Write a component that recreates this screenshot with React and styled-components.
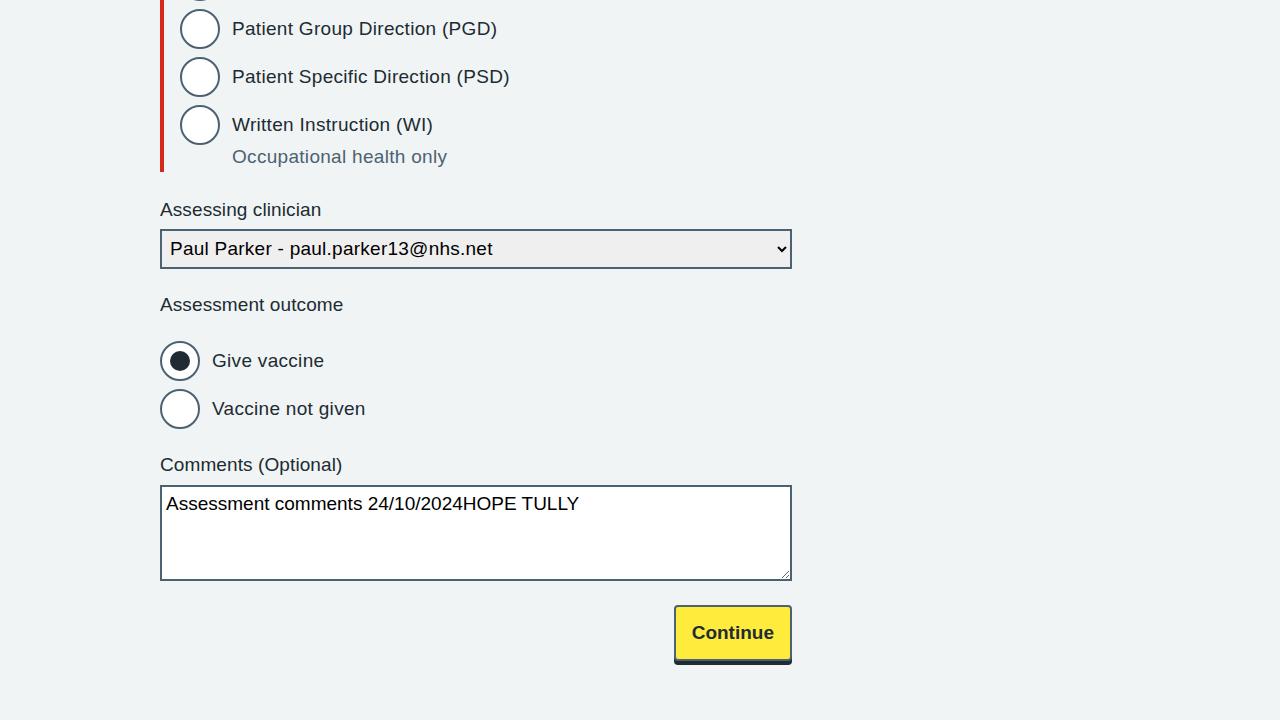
import styled, { createGlobalStyle, css } from 'styled-components'

const GlobalStyle = createGlobalStyle`
  html, body {
    margin: 0;
    padding: 0;
    background: #f0f4f5;
  }
  body {
    font-family: 'Liberation Sans', Arial, sans-serif;
    color: #212b32;
  }
`

const Page = styled.main`
  width: 632px;
  margin-left: 160px;
  padding-bottom: 40px;
`

const ErrorGroup = styled.div`
  margin-top: -39px;
  border-left: 4px solid #d5281b;
  padding-left: 16px;
  padding-bottom: 1px;
`

const RadioItem = styled.label`
  display: flex;
  align-items: center;
  height: 40px;
  margin-bottom: ${(p) => (p.$last ? '0' : '8px')};
  cursor: pointer;
`

const Circle = styled.span`
  position: relative;
  flex: 0 0 auto;
  box-sizing: border-box;
  width: 40px;
  height: 40px;
  border: 2px solid #4c6272;
  border-radius: 50%;
  background: #ffffff;

  ${(p) =>
    p.$checked &&
    css`
      &::after {
        content: '';
        position: absolute;
        top: 8px;
        left: 8px;
        width: 20px;
        height: 20px;
        border-radius: 50%;
        background: #212b32;
      }
    `}
`

const RadioText = styled.span`
  padding-left: 12px;
  font-size: 19px;
  line-height: 28px;
  letter-spacing: 0.3px;
  color: #212b32;
`

const Hint = styled.div`
  margin-top: -2px;
  padding-left: 52px;
  font-size: 19px;
  line-height: 28px;
  letter-spacing: 0.3px;
  color: #4c6272;
`

const Label = styled.div`
  margin-top: ${(p) => p.$top || '0'};
  margin-bottom: ${(p) => p.$bottom || '5px'};
  font-size: 19px;
  line-height: 28px;
  letter-spacing: 0.1px;
  color: #212b32;
`

const Select = styled.select`
  display: block;
  box-sizing: border-box;
  width: 100%;
  height: 40px;
  padding: 0 4px 2px 4px;
  border: 2px solid #4c6272;
  border-radius: 0;
  background: #efefef;
  font-family: 'Liberation Sans', Arial, sans-serif;
  font-size: 19px;
  letter-spacing: 0.25px;
  color: #000000;
`

const RadioList = styled.div`
  margin-top: 22px;
`

const TextArea = styled.textarea`
  display: block;
  box-sizing: border-box;
  width: 100%;
  height: 96px;
  padding: 4px 4px;
  border: 2px solid #4c6272;
  border-radius: 0;
  background: #ffffff;
  font-family: 'Liberation Sans', Arial, sans-serif;
  font-size: 19px;
  line-height: 25px;
  color: #000000;
`

const Actions = styled.div`
  display: flex;
  justify-content: flex-end;
  margin-top: 24px;
`

const Button = styled.button`
  box-sizing: border-box;
  height: 56px;
  padding: 0 16px;
  border: 2px solid #4c6272;
  border-radius: 4px;
  background: #ffeb3b;
  box-shadow: 0 4px 0 #212b32;
  font-family: 'Liberation Sans', Arial, sans-serif;
  font-size: 19px;
  font-weight: 700;
  color: #212b32;
  cursor: pointer;
`

const Radio = ({ children, checked, last }) => (
  <RadioItem $last={last}>
    <Circle $checked={checked} />
    {children && <RadioText>{children}</RadioText>}
  </RadioItem>
)

const App = () => {
  return (
    <>
      <GlobalStyle />
      <Page>
        <ErrorGroup>
          {/* the option above is scrolled out of view; only its circle edge shows */}
          <Radio />
          <Radio>Patient Group Direction (PGD)</Radio>
          <Radio>Patient Specific Direction (PSD)</Radio>
          <Radio last>Written Instruction (WI)</Radio>
          <Hint>Occupational health only</Hint>
        </ErrorGroup>

        <Label $top='24px'>Assessing clinician</Label>
        <Select defaultValue='paul'>
          <option value='paul'>Paul Parker - paul.parker13@nhs.net</option>
        </Select>

        <Label $top='22px' $bottom='0'>Assessment outcome</Label>
        <RadioList>
          <Radio checked>Give vaccine</Radio>
          <Radio>Vaccine not given</Radio>
        </RadioList>

        <Label $top='22px' $bottom='6px'>Comments (Optional)</Label>
        <TextArea defaultValue='Assessment comments 24/10/2024HOPE TULLY' />

        <Actions>
          <Button>Continue</Button>
        </Actions>
      </Page>
    </>
  )
}

export default App
